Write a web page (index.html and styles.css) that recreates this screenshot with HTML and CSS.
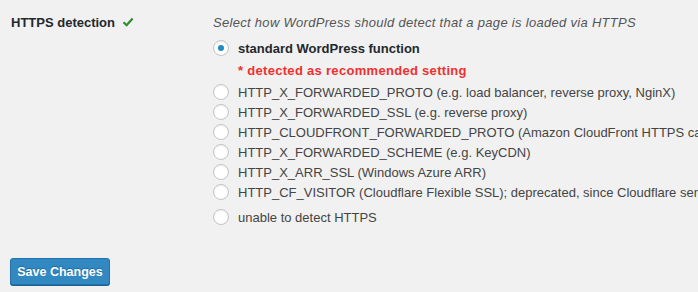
FILE: index.html
```html
<!DOCTYPE html>
<html lang="en">
  <head>
    <meta charset="UTF-8" />
    <title>HTTPS detection</title>
    <link rel="stylesheet" href="styles.css">
  </head>
  <body>
    <form class="settings">
      <div class="form-row">
        <div class="row-label">
          HTTPS detection
          <svg class="check" width="12" height="10" viewBox="0 0 12 10">
            <path d="M1.5 5.2 L4.6 8.2 L10.6 1.5" fill="none" stroke="#2e8b2e" stroke-width="2.2"/>
          </svg>
        </div>
        <fieldset class="row-field">
          <p class="description">Select how WordPress should detect that a page is loaded via HTTPS</p>
          <label class="option selected"><span class="radio checked"></span>standard WordPress function</label>
          <p class="recommended">* detected as recommended setting</p>
          <label class="option"><span class="radio"></span>HTTP_X_FORWARDED_PROTO (e.g. load balancer, reverse proxy, NginX)</label>
          <label class="option"><span class="radio"></span>HTTP_X_FORWARDED_SSL (e.g. reverse proxy)</label>
          <label class="option"><span class="radio"></span>HTTP_CLOUDFRONT_FORWARDED_PROTO (Amazon CloudFront HTTPS cached content)</label>
          <label class="option"><span class="radio"></span>HTTP_X_FORWARDED_SCHEME (e.g. KeyCDN)</label>
          <label class="option"><span class="radio"></span>HTTP_X_ARR_SSL (Windows Azure ARR)</label>
          <label class="option"><span class="radio"></span>HTTP_CF_VISITOR (Cloudflare Flexible SSL); deprecated, since Cloudflare sends HTTP_X_FORWARDED_PROTO now</label>
          <label class="option last"><span class="radio"></span>unable to detect HTTPS</label>
        </fieldset>
      </div>
      <button type="submit" class="submit-button">Save Changes</button>
    </form>
  </body>
</html>
```

FILE: styles.css
```css
html, body {
  margin: 0;
  padding: 0;
  background-color: #f1f1f1;
  overflow: hidden;
}
body {
  font-family: 'Liberation Sans', Arial, sans-serif;
  font-size: 13px;
  color: #333;
  width: 698px;
  height: 292px;
}
.settings {
  padding: 15px 0 0 11px;
}
.form-row {
  display: flex;
}
.row-label {
  width: 202px;
  flex: none;
  font-weight: bold;
  color: #23282d;
  line-height: 16px;
}
.check {
  margin-left: 3px;
}
.row-field {
  border: none;
  margin: 0;
  padding: 0;
  min-width: 0;
  white-space: nowrap;
}
.description {
  margin: 0 0 7px;
  font-style: italic;
  color: #555;
  line-height: 16px;
  letter-spacing: 0.3px;
}
.option {
  display: flex;
  align-items: center;
  height: 20px;
  color: #444;
}
.option.selected {
  font-weight: bold;
  color: #23282d;
}
.option.last {
  margin-top: 5px;
}
.radio {
  width: 14px;
  height: 14px;
  flex: none;
  border: 1px solid #c4c4c4;
  border-radius: 50%;
  background: #fff;
  box-shadow: inset 0 1px 2px rgba(0, 0, 0, 0.07);
  margin-right: 9px;
  display: flex;
  align-items: center;
  justify-content: center;
}
.radio.checked::after {
  content: "";
  width: 6px;
  height: 6px;
  border-radius: 50%;
  background: #1e8cbe;
}
.recommended {
  margin: 0;
  padding: 2px 0 0 25px;
  height: 22px;
  line-height: 22px;
  font-weight: bold;
  color: #f03030;
  letter-spacing: 0.3px;
}
.submit-button {
  margin-top: 31px;
  margin-left: -1px;
  background-color: #3289c2;
  color: #fff;
  border: 1px solid #2371a6;
  border-radius: 3px;
  font-family: inherit;
  font-size: 12.5px;
  font-weight: bold;
  padding: 0;
  height: 27px;
  width: 100px;
  white-space: nowrap;
  box-shadow: 0 1px 0 #1a6190;
  text-shadow: 0 -1px 1px #1d6a9c;
  cursor: pointer;
}
```
